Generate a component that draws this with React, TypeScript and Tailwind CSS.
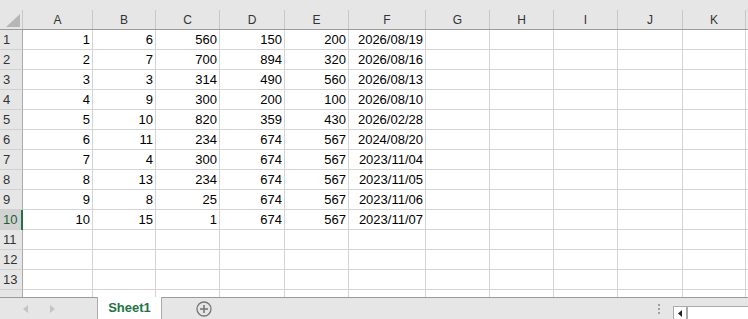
import React from "react";

const cols = [
  { l: "A", w: "w-[70px]" },
  { l: "B", w: "w-[63px]" },
  { l: "C", w: "w-[64px]" },
  { l: "D", w: "w-[65px]" },
  { l: "E", w: "w-[64px]" },
  { l: "F", w: "w-[77px]" },
  { l: "G", w: "w-[64px]" },
  { l: "H", w: "w-[64px]" },
  { l: "I", w: "w-[64px]" },
  { l: "J", w: "w-[65px]" },
  { l: "K", w: "w-[63px]" },
];

const data: (string | number)[][] = [
  [1, 6, 560, 150, 200, "2026/08/19"],
  [2, 7, 700, 894, 320, "2026/08/16"],
  [3, 3, 314, 490, 560, "2026/08/13"],
  [4, 9, 300, 200, 100, "2026/08/10"],
  [5, 10, 820, 359, 430, "2026/02/28"],
  [6, 11, 234, 674, 567, "2024/08/20"],
  [7, 4, 300, 674, 567, "2023/11/04"],
  [8, 13, 234, 674, 567, "2023/11/05"],
  [9, 8, 25, 674, 567, "2023/11/06"],
  [10, 15, 1, 674, 567, "2023/11/07"],
];

const font = { fontFamily: '"Liberation Sans", Arial, sans-serif' };

function Row({ n, partial }: { n: number; partial?: boolean }) {
  const vals = data[n - 1] || [];
  const sel = n === 10;
  return (
    <div className={`flex shrink-0 overflow-hidden ${partial ? "h-[7px]" : "h-[20px]"}`}>
      <div
        className={`relative h-[20px] w-[23px] shrink-0 border-r border-b border-r-[#ababab] border-b-[#d0d0d0] pl-[3px] text-[13px] leading-[19px] ${
          sel ? "bg-[#d2d2d2] text-[#1e5e3a]" : "bg-[#e6e6e6] text-[#333]"
        }`}
      >
        {partial ? "" : n}
        {sel && <div className="absolute right-[-1px] top-0 h-[20px] w-[2px] bg-[#217346]" />}
      </div>
      {cols.map((c, i) => (
        <div
          key={c.l}
          className={`${c.w} h-[20px] shrink-0 border-r border-b border-[#d4d4d4] pr-[2px] text-right text-[13px] leading-[19px] text-black`}
        >
          {vals[i] !== undefined ? vals[i] : ""}
        </div>
      ))}
      <div className="h-[20px] flex-1 border-b border-[#d4d4d4]" />
    </div>
  );
}

export default function App() {
  return (
    <div className="flex h-[319px] w-[748px] flex-col overflow-hidden bg-white" style={font}>
      <div className="h-[10px] shrink-0 bg-[#e6e6e6]" />
      <div className="flex h-[20px] shrink-0 border-b border-[#9b9b9b] bg-[#e6e6e6]">
        <div className="relative w-[23px] shrink-0 border-r border-[#c8c8c8]">
          <svg className="absolute left-[6px] top-[4px]" width="14" height="13" viewBox="0 0 14 13">
            <polygon points="14,0 14,13 0,13" fill="#b6b6b6" />
          </svg>
        </div>
        {cols.map((c) => (
          <div
            key={c.l}
            className={`${c.w} shrink-0 border-r border-[#c8c8c8] pt-[1px] text-center text-[12px] leading-[18px] text-[#333]`}
          >
            {c.l}
          </div>
        ))}
        <div className="flex-1" />
      </div>
      {Array.from({ length: 13 }, (_, i) => (
        <Row key={i} n={i + 1} />
      ))}
      <Row n={14} partial />
      <div className="relative flex h-[22px] shrink-0 items-center border-t border-[#9b9b9b] bg-[#e6e6e6]">
        <div className="flex w-[97px] items-center gap-[22px] pl-[23px]">
          <svg width="5" height="8" viewBox="0 0 5 8">
            <polygon points="5,0 5,8 0,4" fill="#c4c4c4" />
          </svg>
          <svg width="5" height="8" viewBox="0 0 5 8">
            <polygon points="0,0 0,8 5,4" fill="#c4c4c4" />
          </svg>
        </div>
        <div className="mt-[-1px] flex h-[22px] w-[65px] items-center justify-center self-start border-x border-[#ababab] bg-white text-[13px] font-bold text-[#217346]">
          Sheet1
        </div>
        <div className="ml-[34px] flex items-center">
          <svg width="16" height="16" viewBox="0 0 16 16">
            <circle cx="8" cy="8" r="7" fill="none" stroke="#777" strokeWidth="1.3" />
            <line x1="8" y1="4" x2="8" y2="12" stroke="#777" strokeWidth="1.6" />
            <line x1="4" y1="8" x2="12" y2="8" stroke="#777" strokeWidth="1.6" />
          </svg>
        </div>
        <div className="ml-auto mr-[13px] flex flex-col gap-[2px]">
          <div className="h-[2px] w-[2px] bg-[#a0a0a0]" />
          <div className="h-[2px] w-[2px] bg-[#a0a0a0]" />
          <div className="h-[2px] w-[2px] bg-[#a0a0a0]" />
        </div>
        <div className="mt-[8px] flex h-[14px] w-[75px] self-start border border-r-0 border-[#ababab] bg-white">
          <div className="flex w-[14px] items-center justify-center border-r-2 border-[#ababab]">
            <svg width="4" height="7" viewBox="0 0 4 7">
              <polygon points="4,0 4,7 0,3.5" fill="#222" />
            </svg>
          </div>
          <div className="flex-1" />
        </div>
      </div>
    </div>
  );
}
